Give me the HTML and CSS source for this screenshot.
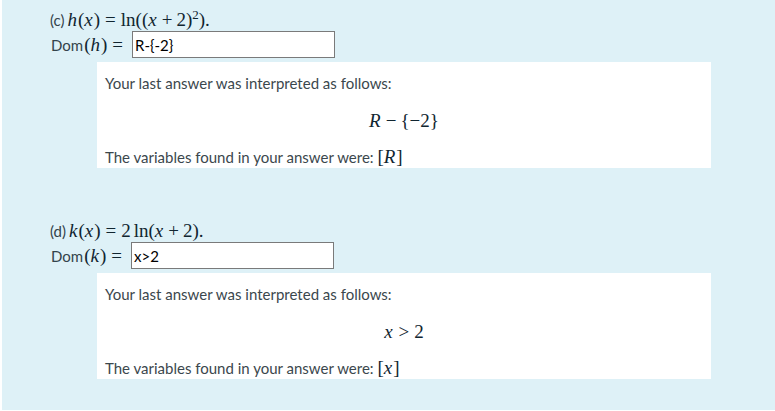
FILE: index.html
```html
<!DOCTYPE html>
<html>
<head>
<meta charset="utf-8">
<link rel="stylesheet" href="styles.css">
</head>
<body>
<div class="formulation">
  <div class="part">
    <div class="row q">
      <span class="lbl">(c)</span>
      <span class="m"><i>h</i>(<i>x</i>)<span class="op">=</span>ln((<i>x</i><span class="bin">+</span>2)<sup>2</sup>).</span>
    </div>
    <div class="row dom">
      <span class="lbl">Dom</span>
      <span class="m">(<i>h</i>)<span class="op">=</span></span>
      <span class="inp">R-{-2}</span>
    </div>
    <div class="fb">
      <p class="t1">Your last answer was interpreted as follows:</p>
      <p class="disp"><span class="m"><i>R</i><span class="bin">−</span>{−2}</span></p>
      <p class="t3">The variables found in your answer were: <span class="m">[<i>R</i>]</span></p>
    </div>
  </div>
  <div class="part second">
    <div class="row q">
      <span class="lbl">(d)</span>
      <span class="m"><i>k</i>(<i>x</i>)<span class="op">=</span>2<span class="thin"></span>ln(<i>x</i><span class="bin">+</span>2).</span>
    </div>
    <div class="row dom">
      <span class="lbl">Dom</span>
      <span class="m">(<i>k</i>)<span class="op">=</span></span>
      <span class="inp">x&gt;2</span>
    </div>
    <div class="fb">
      <p class="t1">Your last answer was interpreted as follows:</p>
      <p class="disp"><span class="m"><i>x</i><span class="op">&gt;</span>2</span></p>
      <p class="t3">The variables found in your answer were: <span class="m">[<i>x</i>]</span></p>
    </div>
  </div>
</div>
</body>
</html>
```
FILE: styles.css
```css
html, body {
  margin: 0;
  padding: 0;
  background: #ffffff;
}
body {
  font-family: "Lato", "Open Sans", "Liberation Sans", sans-serif;
  font-size: 15px;
  color: #33434b;
}
.formulation {
  margin-left: 2px;
  height: 410px;
  box-sizing: border-box;
  background: #def1f7;
  padding: 8px 0 0 48px;
}
.part {
  width: 614px;
}
.second {
  margin-top: 51px;
}
.row {
  display: flex;
  align-items: center;
}
.q {
  height: 23px;
}
.dom {
  height: 27px;
}
.lbl {
  margin-right: 3px;
}
.dom .lbl {
  margin-left: 1px;
  margin-right: 1px;
}
.m {
  font-family: "Liberation Serif", "DejaVu Serif", serif;
  font-size: 19px;
  color: #102530;
  white-space: nowrap;
}
.m i {
  font-style: italic;
  padding-right: 1px;
}
.m sup {
  font-size: 13px;
  vertical-align: 7px;
  line-height: 0;
}
.op {
  margin: 0 5px;
}
.bin {
  margin: 0 4px;
}
.thin {
  display: inline-block;
  width: 3px;
}
.inp {
  margin-left: 4px;
  box-sizing: border-box;
  width: 203px;
  height: 27px;
  border: 1px solid #7a7a7a;
  background: #ffffff;
  color: #000000;
  font-size: 15px;
  padding-left: 2px;
  display: flex;
  align-items: center;
}
.fb {
  margin-top: 4px;
  margin-left: 47px;
  width: 614px;
  height: 106px;
  box-sizing: border-box;
  background: #ffffff;
  padding: 11px 8px 0 8px;
  font-size: 15px;
  color: #3b474d;
}
.fb p {
  margin: 0;
}
.t1 {
  line-height: 20px;
}
.disp {
  margin-top: 16px !important;
  line-height: 24px;
  text-align: center;
}
.t3 {
  margin-top: 14px !important;
  line-height: 20px;
}
```
